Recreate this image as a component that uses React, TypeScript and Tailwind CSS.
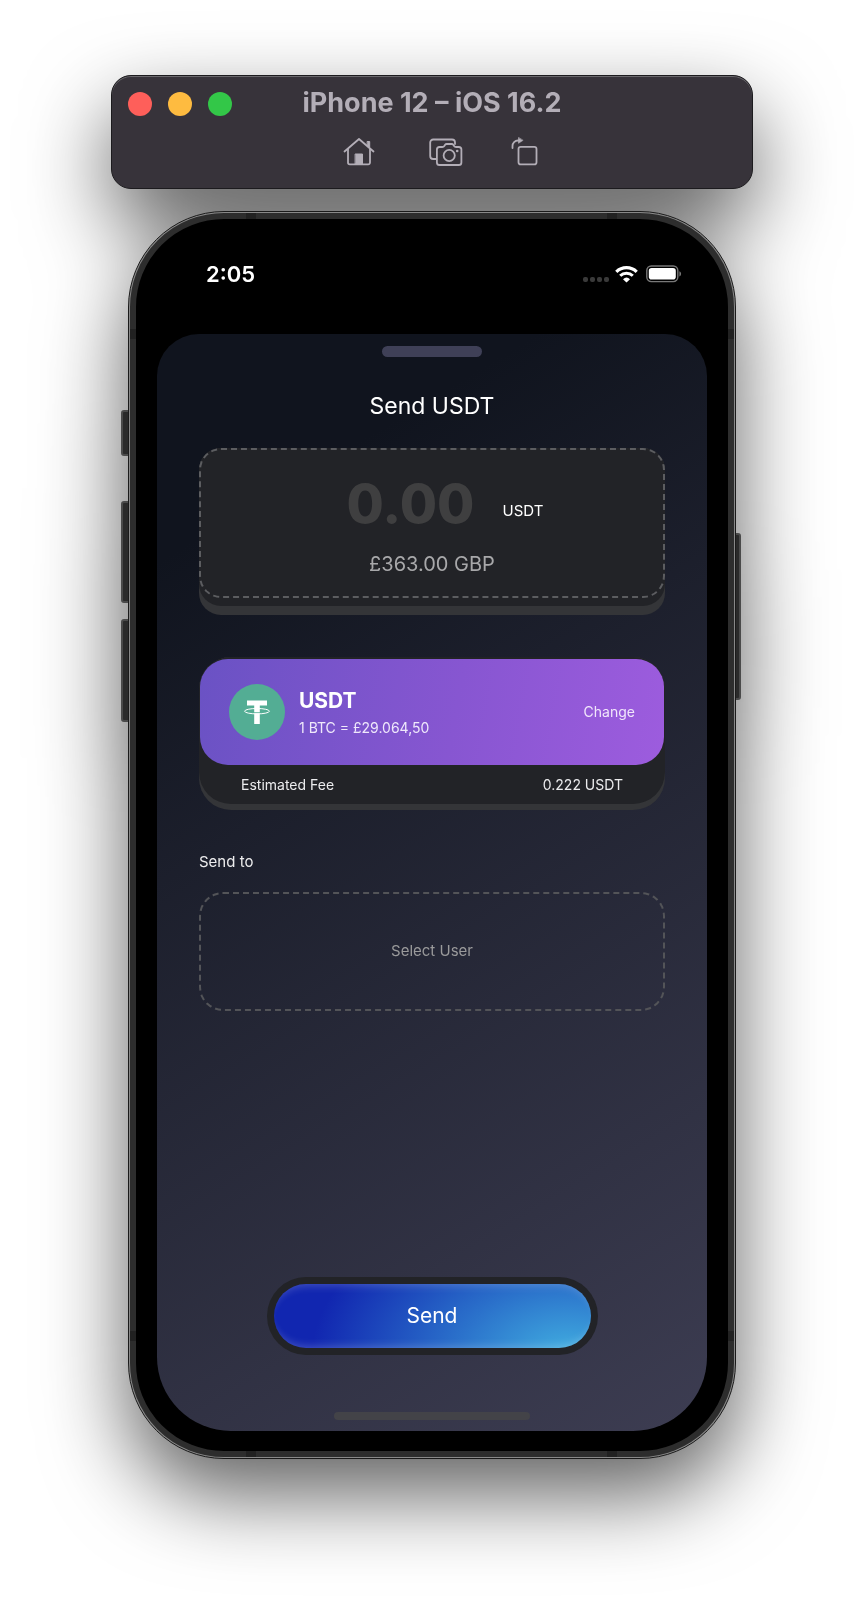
import React from "react";

const bands = [
  "left-[117px] top-[1px] h-[6px] w-[10px]",
  "right-[118px] top-[1px] h-[6px] w-[10px]",
  "left-[117px] bottom-[1px] h-[6px] w-[10px]",
  "right-[118px] bottom-[1px] h-[6px] w-[10px]",
  "left-[1px] top-[117px] h-[10px] w-[6px]",
  "right-[1px] top-[117px] h-[10px] w-[6px]",
  "left-[1px] bottom-[117px] h-[10px] w-[6px]",
  "right-[1px] bottom-[117px] h-[10px] w-[6px]",
];

const sideKeys = [
  "-left-[7px] top-[199px] h-[46px] w-[10px] rounded-l-[3px]",
  "-left-[7px] top-[290px] h-[102px] w-[10px] rounded-l-[3px]",
  "-left-[7px] top-[408px] h-[103px] w-[10px] rounded-l-[3px]",
  "-right-[5px] top-[322px] h-[167px] w-[7px] rounded-r-[3px]",
];

function HomeIcon() {
  return (
    <svg width="32" height="30" viewBox="0 0 32 30" fill="none" stroke="currentColor" strokeWidth="1.8" strokeLinecap="round" strokeLinejoin="round">
      <path d="M1.500 14.500 16 2l14.500 12.500" />
      <path d="M5 12v13.500a1.800 1.800 0 0 0 1.800 1.800h18.400a1.800 1.800 0 0 0 1.800-1.800V12" />
      <path d="M24.500 4.500h2.200v6l-2.200-2z" fill="currentColor" strokeWidth="1" />
      <path d="M12.500 17h7v10h-7z" fill="currentColor" strokeWidth="1" />
    </svg>
  );
}

function CameraIcon() {
  return (
    <svg width="34" height="30" viewBox="0 0 34 30" fill="none" stroke="currentColor" strokeWidth="1.8" strokeLinecap="round" strokeLinejoin="round">
      <path d="M7 22H4.200A3 3 0 0 1 1.200 19V5.500a3 3 0 0 1 3-3H23a3 3 0 0 1 3 3V7" />
      <path d="M10.500 10h2.800c1.200 0 1.700-.5 2.200-1.300l.6-.9c.4-.6.9-.8 1.600-.8h5c.7 0 1.200.2 1.600.8l.6.9c.5.800 1 1.300 2.200 1.300h2.700a2.600 2.600 0 0 1 2.600 2.600v12.800a2.600 2.600 0 0 1-2.600 2.600H10.500a2.600 2.600 0 0 1-2.600-2.600V12.600a2.600 2.600 0 0 1 2.600-2.600z" />
      <circle cx="20.200" cy="18.500" r="5.600" />
      <circle cx="28.200" cy="14" r="1.300" fill="currentColor" stroke="none" />
    </svg>
  );
}

function RotateIcon() {
  return (
    <svg width="28" height="30" viewBox="0 0 28 30" fill="none" stroke="currentColor" strokeWidth="1.8" strokeLinecap="round" strokeLinejoin="round">
      <path d="M1.500 11V9A5.500 5.500 0 0 1 7 3.500h1" />
      <path d="M7.500.7v5.600l4.300-2.800z" fill="currentColor" strokeWidth=".6" />
      <rect x="7.500" y="9.800" width="18" height="17.600" rx="2.200" />
    </svg>
  );
}

function WifiIcon() {
  return (
    <svg width="23" height="17" viewBox="0 0 23 17" fill="none" stroke="#fff">
      <path d="M1.300 5.800a14.600 14.600 0 0 1 20.400 0" strokeWidth="3.2" />
      <path d="M5.200 9.700a9 9 0 0 1 12.600 0" strokeWidth="3" />
      <path d="M11.500 16.500 8 13.200a5.200 5.200 0 0 1 7 0z" fill="#fff" stroke="none" />
    </svg>
  );
}

function BatteryIcon() {
  return (
    <svg width="36" height="18" viewBox="0 0 36 18" fill="none">
      <rect x=".8" y="1" width="31" height="15.600" rx="4.500" stroke="#777" strokeWidth="1.4" />
      <rect x="2.800" y="3" width="27" height="11.600" rx="2.800" fill="#fff" />
      <path d="M33.400 6.200c2.200.8 2.200 4.400 0 5.200z" fill="#777" />
    </svg>
  );
}

function TetherIcon() {
  return (
    <svg width="56" height="56" viewBox="0 0 56 56" aria-hidden="true">
      <circle cx="28" cy="28" r="28" fill="#53ad94" />
      <path d="M18 16.500h20v5h-7.200V40h-5.600V21.500H18z" fill="#fff" />
      <ellipse cx="28" cy="27.200" rx="12.400" ry="2.700" fill="none" stroke="#fff" strokeWidth="1" />
      <path d="M24.800 28.600h6.400" stroke="#53ad94" strokeWidth=".8" />
    </svg>
  );
}

function TitleBar() {
  return (
    <header className="grid w-full max-w-[642px] grid-cols-[1fr_auto_1fr] rounded-[20px] border border-[#1c1b1e] bg-[#37333a] px-4 pt-[12px] pb-[21px] text-[#b3aeb7] shadow-[inset_0_1px_0_#6a686c]">
      <div className="flex items-center gap-4 pt-[2px]">
        <button aria-label="Close" className="size-6 rounded-full bg-[#fe5f5a]" />
        <button aria-label="Minimise" className="size-6 rounded-full bg-[#febb40]" />
        <button aria-label="Zoom" className="size-6 rounded-full bg-[#33c748]" />
      </div>
      <h1 className="text-[27px] leading-[30px] font-bold whitespace-nowrap">iPhone 12 – iOS 16.2</h1>
      <nav className="col-span-3 mt-[19px] flex items-center justify-center pl-[18px]">
        <button aria-label="Home" className="mr-[54px]"><HomeIcon /></button>
        <button aria-label="Screenshot" className="mr-[48px]"><CameraIcon /></button>
        <button aria-label="Rotate"><RotateIcon /></button>
      </nav>
    </header>
  );
}

function StatusBar() {
  return (
    <div className="flex h-[115px] items-start justify-between pt-[43px] pr-[25px] pl-[49px] text-white">
      <span className="text-[22px] leading-[24px] font-semibold">2:05</span>
      <div className="flex h-[24px] items-center">
        <div className="mt-[10px] mr-[6px] flex gap-[2px]">
          {[0, 1, 2, 3].map((i) => (
            <span key={i} className="size-[5px] rounded-[2px] bg-[#3a3a3a]" />
          ))}
        </div>
        <WifiIcon />
        <span className="ml-2"><BatteryIcon /></span>
      </div>
    </div>
  );
}

function AmountCard() {
  return (
    <section className="mt-[27px] rounded-[22px] bg-[#343538] pb-[9px]">
      <div className="rounded-[22px] bg-[#222327] pb-[8px]">
        <div className="flex h-[150px] flex-col items-center rounded-[22px] border-2 border-dashed border-[#5c5d60] pt-[24px]">
          <div className="flex items-center gap-[28px] pl-[26px]">
            <input aria-label="Amount" placeholder="0.00" className="w-[128px] bg-transparent text-[54px] leading-[60px] font-extrabold outline-none placeholder:text-[#3f3f40]" />
            <span className="pt-[13px] text-[15px] leading-[20px] text-white">USDT</span>
          </div>
          <p className="mt-[18px] text-[20px] leading-[24px] text-[#a8a8aa]">£363.00 GBP</p>
        </div>
      </div>
    </section>
  );
}

function AssetCard() {
  return (
    <section className="mt-[42px] rounded-[32px] bg-[#343538] pb-[6px]">
      <div className="rounded-[32px] bg-[#222327] px-px pt-[2px]">
        <div className="flex h-[106px] items-center rounded-[28px] bg-[linear-gradient(100deg,#6a52c4_0%,#8756d1_55%,#9d5cde_100%)] px-[29px] text-white">
          <TetherIcon />
          <div className="ml-[14px] flex-1">
            <h3 className="text-[21px] leading-[26px] font-bold">USDT</h3>
            <p className="mt-[5px] text-[14px] leading-[18px] text-[#efe8fb]">1 BTC = £29.064,50</p>
          </div>
          <button className="text-[14px] leading-[20px] text-[#f1e6fb]">Change</button>
        </div>
        <div className="flex h-[39px] items-center justify-between px-[41px] text-[14px] text-[#ececee]">
          <span>Estimated Fee</span>
          <span>0.222 USDT</span>
        </div>
      </div>
    </section>
  );
}

function SendSheet() {
  return (
    <main className="flex flex-1 flex-col rounded-t-[42px] rounded-b-[74px] bg-[linear-gradient(149deg,#10141e_0%,#10141e_16%,#3d3d52_100%)] px-[42px]">
      <div className="mx-auto mt-[12px] h-[11px] w-[100px] rounded-full bg-[#3f4057]" />
      <h2 className="mt-[34px] text-center text-[23px] leading-[30px] text-white">Send USDT</h2>
      <AmountCard />
      <AssetCard />
      <h3 className="mt-[42px] text-[15px] leading-[20px] text-[#ededee]">Send to</h3>
      <button className="mt-[20px] h-[119px] rounded-[24px] border-2 border-dashed border-[#535458] text-[15px] text-[#9a9a9b]">
        Select User
      </button>
      <button className="mx-auto mt-auto h-[78px] w-[331px] max-w-full rounded-full bg-[#222327] p-[7px] text-[21px] text-white">
        <span className="flex h-full items-center justify-center rounded-full bg-[radial-gradient(ellipse_92%_280%_at_93%_110%,#41aee0_0%,#2b72cb_38%,#1126b0_88%)] shadow-[inset_0_9px_8px_-7px_rgba(255,255,255,0.2),inset_0_-9px_8px_-7px_rgba(255,255,255,0.2)]">
          Send
        </span>
      </button>
      <div className="mx-auto mt-[57px] mb-[11px] h-[8px] w-[196px] rounded-full bg-[#434348]" />
    </main>
  );
}

function Phone() {
  return (
    <div className="relative mt-[22px] w-full max-w-[608px]">
      {sideKeys.map((c) => (
        <span key={c} className={`absolute border-2 border-[#4a4a4a] bg-[#2a2a2a] ${c}`} />
      ))}
      <div className="relative flex min-h-[1248px] flex-col rounded-[96px] border border-[#1a1a1a] bg-[#888] p-px">
        <div className="flex flex-1 flex-col rounded-[94px] border-[6px] border-[#2d2d2d] bg-black px-[21px] pb-[20px]">
          <StatusBar />
          <SendSheet />
        </div>
        {bands.map((c) => (
          <span key={c} className={`absolute bg-[#212121] ${c}`} />
        ))}
      </div>
    </div>
  );
}

export default function App() {
  return (
    <div className="min-h-screen overflow-hidden bg-white font-['Inter','Liberation_Sans',sans-serif]">
      <div className="flex flex-col items-center px-[64px] pt-[75px] pb-[151px] drop-shadow-[0_36px_42px_rgba(0,0,0,0.62)]">
        <TitleBar />
        <Phone />
      </div>
    </div>
  );
}
